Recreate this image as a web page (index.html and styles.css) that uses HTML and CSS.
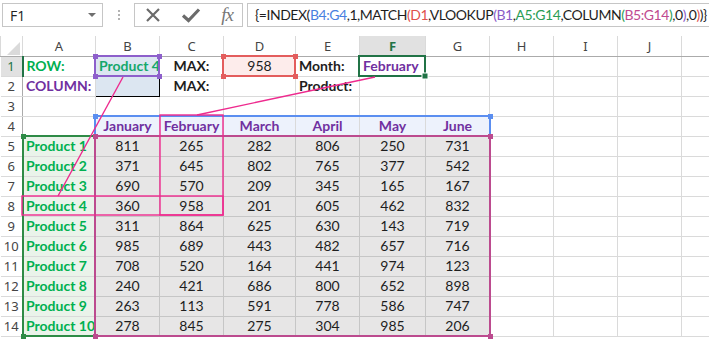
FILE: index.html
```html
<!DOCTYPE html>
<html lang="en">
<head>
    <meta charset="UTF-8">
    <title>INDEX MATCH VLOOKUP</title>
    <link rel="stylesheet" href="styles.css">
</head>
<body>
    <div class="formula-bar">
        <div class="name-box">F1<span class="arrow"></span></div>
        <div class="grip"><i></i><i></i><i></i></div>
        <div class="fx-box">
            <svg width="16" height="16" viewBox="0 0 16 16"><path d="M2 2 L14 14 M14 2 L2 14" stroke="#6b6b6b" stroke-width="2.2" fill="none"/></svg>
            <svg width="20" height="16" viewBox="0 0 20 16"><path d="M2 8.5 L7.5 13.5 L18 2.5" stroke="#6b6b6b" stroke-width="3.2" fill="none"/></svg>
            <span class="fx">fx</span>
        </div>
        <div class="formula">{=INDEX(<span class="r-blue">B4:G4</span>,1,MATCH<span class="r-red">(D1</span>,VLOOKUP<span class="r-purple">(B1</span>,<span class="r-green">A5:G14</span>,COLUMN<span class="r-green">(</span><span class="r-pink">B5:G14</span><span class="r-green">)</span>,0<span class="r-purple">)</span>,0<span class="r-red">)</span>)}</div>
    </div>

    <div class="sheet-wrap">
        <table class="sheet">
            <colgroup>
                <col style="width:22px"><col style="width:73px"><col style="width:64px"><col style="width:64px">
                <col style="width:72px"><col style="width:64px"><col style="width:66px"><col style="width:64px">
                <col style="width:64px"><col style="width:64px"><col style="width:64px"><col style="width:28px">
            </colgroup>
            <tr class="head">
                <th class="corner"><svg width="14" height="14" viewBox="0 0 14 14"><path d="M13 0 L13 13 L0 13 Z" fill="#dadada"/></svg></th>
                <th>A</th><th>B</th><th>C</th><th>D</th><th>E</th><th class="on">F</th><th>G</th><th>H</th><th>I</th><th>J</th><th></th>
            </tr>
            <tr>
                <td class="rh on">1</td>
                <td class="bold green">ROW:</td>
                <td class="pick bold teal center">Product 4</td>
                <td class="bold center">MAX:</td>
                <td class="maxval center">958</td>
                <td class="bold">Month:</td>
                <td class="bold purple">February</td>
                <td></td><td></td><td></td><td></td><td></td>
            </tr>
            <tr>
                <td class="rh">2</td>
                <td class="bold purple">COLUMN:</td>
                <td class="pick boxed"></td>
                <td class="bold center">MAX:</td>
                <td></td>
                <td class="bold">Product:</td>
                <td></td><td></td><td></td><td></td><td></td><td></td>
            </tr>
            <tr>
                <td class="rh">3</td>
                <td></td><td></td><td></td><td></td><td></td><td></td><td></td><td></td><td></td><td></td><td></td>
            </tr>
            <tr>
                <td class="rh">4</td>
                <td></td>
                <td class="month">January</td><td class="month">February</td><td class="month">March</td>
                <td class="month">April</td><td class="month">May</td><td class="month">June</td>
                <td></td><td></td><td></td><td></td>
            </tr>
            <tr><td class="rh">5</td><td class="prod">Product 1</td><td class="num">811</td><td class="num">265</td><td class="num">282</td><td class="num">806</td><td class="num">250</td><td class="num">731</td><td></td><td></td><td></td><td></td></tr>
            <tr><td class="rh">6</td><td class="prod">Product 2</td><td class="num">371</td><td class="num">645</td><td class="num">802</td><td class="num">765</td><td class="num">377</td><td class="num">542</td><td></td><td></td><td></td><td></td></tr>
            <tr><td class="rh">7</td><td class="prod">Product 3</td><td class="num">690</td><td class="num">570</td><td class="num">209</td><td class="num">345</td><td class="num">165</td><td class="num">167</td><td></td><td></td><td></td><td></td></tr>
            <tr><td class="rh">8</td><td class="prod">Product 4</td><td class="num">360</td><td class="num">958</td><td class="num">201</td><td class="num">605</td><td class="num">462</td><td class="num">832</td><td></td><td></td><td></td><td></td></tr>
            <tr><td class="rh">9</td><td class="prod">Product 5</td><td class="num">311</td><td class="num">864</td><td class="num">625</td><td class="num">630</td><td class="num">143</td><td class="num">719</td><td></td><td></td><td></td><td></td></tr>
            <tr><td class="rh">10</td><td class="prod">Product 6</td><td class="num">985</td><td class="num">689</td><td class="num">443</td><td class="num">482</td><td class="num">657</td><td class="num">716</td><td></td><td></td><td></td><td></td></tr>
            <tr><td class="rh">11</td><td class="prod">Product 7</td><td class="num">708</td><td class="num">520</td><td class="num">164</td><td class="num">441</td><td class="num">974</td><td class="num">123</td><td></td><td></td><td></td><td></td></tr>
            <tr><td class="rh">12</td><td class="prod">Product 8</td><td class="num">240</td><td class="num">421</td><td class="num">686</td><td class="num">800</td><td class="num">652</td><td class="num">898</td><td></td><td></td><td></td><td></td></tr>
            <tr><td class="rh">13</td><td class="prod">Product 9</td><td class="num">263</td><td class="num">113</td><td class="num">591</td><td class="num">778</td><td class="num">586</td><td class="num">747</td><td></td><td></td><td></td><td></td></tr>
            <tr><td class="rh">14</td><td class="prod">Product 10</td><td class="num">278</td><td class="num">845</td><td class="num">275</td><td class="num">304</td><td class="num">985</td><td class="num">206</td><td></td><td></td><td></td><td></td></tr>
        </table>

        <!-- range highlights and arrows drawn over the grid -->
        <svg class="overlay" width="709" height="303" viewBox="0 0 709 303">
            <g fill="none" stroke-width="2">
                <rect x="23" y="100" width="467" height="200" stroke="#2e8b46"/>
                <rect x="95" y="80" width="395" height="20" stroke="#5b8ef0"/>
                <rect x="95" y="100" width="395" height="200" stroke="#bc4b8f"/>
                <rect x="95" y="20" width="64" height="20" stroke="#8d5fcb"/>
                <rect x="223" y="20" width="72" height="20" stroke="#e35d5d"/>
                <rect x="359" y="20" width="66" height="20" stroke="#217346"/>
            </g>
            <g>
                <rect x="21" y="98" width="5" height="5" fill="#2e8b46"/>
                <rect x="21" y="298" width="5" height="5" fill="#2e8b46"/>
                <rect x="93" y="78" width="5" height="5" fill="#5b8ef0"/>
                <rect x="488" y="78" width="5" height="5" fill="#5b8ef0"/>
                <rect x="93" y="98" width="5" height="5" fill="#bc4b8f"/>
                <rect x="488" y="98" width="5" height="5" fill="#bc4b8f"/>
                <rect x="93" y="298" width="5" height="5" fill="#bc4b8f"/>
                <rect x="488" y="298" width="5" height="5" fill="#bc4b8f"/>
                <rect x="93" y="18" width="5" height="5" fill="#8d5fcb"/>
                <rect x="157" y="18" width="5" height="5" fill="#8d5fcb"/>
                <rect x="93" y="38" width="5" height="5" fill="#8d5fcb"/>
                <rect x="157" y="38" width="5" height="5" fill="#8d5fcb"/>
                <rect x="221" y="18" width="5" height="5" fill="#e35d5d"/>
                <rect x="293" y="18" width="5" height="5" fill="#e35d5d"/>
                <rect x="221" y="38" width="5" height="5" fill="#e35d5d"/>
                <rect x="293" y="38" width="5" height="5" fill="#e35d5d"/>
                <rect x="422" y="37" width="6" height="6" fill="#217346" stroke="#fff" stroke-width="1"/>
            </g>
            <g fill="none" stroke="#ee2a8e" stroke-width="1.4">
                <line x1="123" y1="41" x2="58" y2="160"/>
                <line x1="375" y1="41" x2="197" y2="79"/>
                <rect x="22" y="160" width="201" height="19"/>
                <rect x="160" y="79" width="63" height="100"/>
            </g>
        </svg>
    </div>
</body>
</html>
```

FILE: styles.css
```css
* {
    margin: 0;
    padding: 0;
    box-sizing: border-box;
}

body {
    background-color: #fff;
    font-family: Lato, "Liberation Sans", sans-serif;
    color: #1e1e1e;
    width: 709px;
    height: 339px;
    overflow: hidden;
}

/* formula bar */

.formula-bar {
    display: flex;
    align-items: center;
    padding: 3px 0 0 2px;
    height: 27px;
}

.name-box {
    width: 101px;
    height: 24px;
    border: 1px solid #c6c6c6;
    display: flex;
    align-items: center;
    justify-content: space-between;
    padding: 0 6px 0 7px;
    font: 14px "Open Sans", sans-serif;
    color: #222;
}

.name-box .arrow {
    width: 0;
    height: 0;
    border-left: 4px solid transparent;
    border-right: 4px solid transparent;
    border-top: 4px solid #6f6f6f;
}

.grip {
    width: 31px;
    display: flex;
    flex-direction: column;
    align-items: center;
    gap: 2px;
}

.grip i {
    width: 2px;
    height: 2px;
    background-color: #b3b3b3;
}

.fx-box {
    width: 109px;
    height: 24px;
    border: 1px solid #c6c6c6;
    display: flex;
    align-items: center;
    justify-content: space-between;
    padding: 0 9px 0 10px;
}

.fx-box .fx {
    font: italic 19px "Liberation Serif", serif;
    color: #777;
    letter-spacing: -1px;
}

.formula {
    flex: 1;
    height: 24px;
    margin-left: 4px;
    margin-right: -4px;
    border: 1px solid #c6c6c6;
    padding-left: 7px;
    font-size: 14px;
    letter-spacing: -0.45px;
    line-height: 22px;
    white-space: nowrap;
    overflow: hidden;
    color: #1e1e1e;
}

.r-blue { color: #4a7fe0; }
.r-red { color: #e0504c; }
.r-purple { color: #8a5cc8; }
.r-green { color: #2a9d55; }
.r-pink { color: #c04a90; }

/* sheet */

.sheet-wrap {
    position: relative;
    margin-top: 9px;
}

.sheet {
    border-collapse: collapse;
    table-layout: fixed;
    width: 709px;
}

.sheet tr {
    height: 20px;
}

.sheet td,
.sheet th {
    height: 20px;
    padding: 0 3px;
    border: 1px solid #dadada;
    font-size: 14px;
    font-weight: 400;
    line-height: 18px;
    white-space: nowrap;
    overflow: hidden;
    text-align: left;
}

.sheet .head th {
    border-top: none;
    border-bottom-color: #ababab;
    font: 13px "Noto Sans", sans-serif;
    color: #444;
    text-align: center;
}

.sheet .head .corner {
    padding: 3px 1px 0 0;
    text-align: right;
    vertical-align: bottom;
}

.sheet .head .corner svg {
    display: block;
    margin-left: auto;
}

.sheet .head .on {
    background-color: #e1e1e1;
    color: #217346;
    font-weight: 700;
    border-bottom: 2px solid #217346;
}

.sheet .rh {
    padding: 0;
    font: 13px "Noto Sans", sans-serif;
    color: #444;
    text-align: center;
    border-left: none;
    border-right-color: #ababab;
}

.sheet .rh.on {
    background-color: #e1e1e1;
    color: #217346;
    border-right: 2px solid #217346;
}

.sheet .bold {
    font-weight: 700;
}

.sheet .center {
    text-align: center;
}

.sheet .green {
    color: #00b050;
}

.sheet .purple {
    color: #7030a0;
}

.sheet .teal {
    color: #14a86c;
}

.sheet .pick {
    background-color: #dce6f1;
}

.sheet .boxed {
    border: 1px solid #000;
}

.sheet .maxval {
    background-color: #fdeceb;
}

.sheet .month {
    background-color: #edf2fc;
    color: #7030a0;
    font-weight: 700;
    text-align: center;
}

.sheet .prod {
    background-color: #eaf3ea;
    color: #00b050;
    font-weight: 700;
}

.sheet .num {
    background-color: #e7e6e6;
    border-color: #c6c6c6;
    text-align: center;
}

.overlay {
    position: absolute;
    left: 0;
    top: 0;
    pointer-events: none;
}
```
